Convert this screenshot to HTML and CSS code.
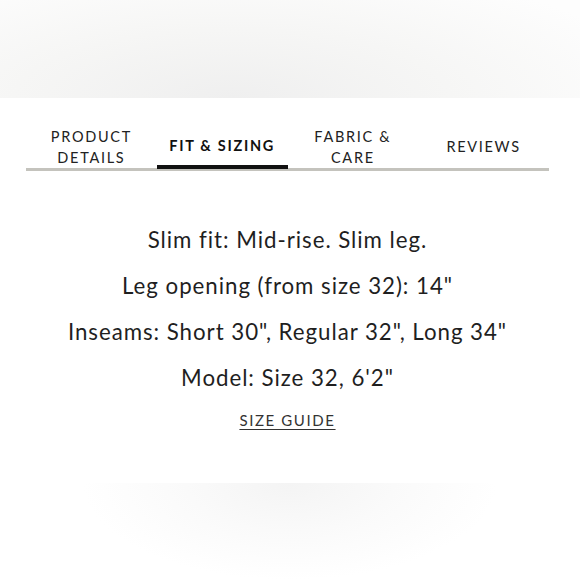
FILE: index.html
```html
<!DOCTYPE html>
<html lang="en">
<head>
<meta charset="utf-8">
<link rel="stylesheet" href="styles.css">
</head>
<body>
<div class="top-fade"></div>
<section class="panel">
  <nav class="tabs">
    <div class="tab">PRODUCT<br>DETAILS</div>
    <div class="tab active">FIT &amp; SIZING</div>
    <div class="tab">FABRIC &amp;<br>CARE</div>
    <div class="tab">REVIEWS</div>
  </nav>
  <div class="content">
    <p class="line">Slim fit: Mid-rise. Slim leg.</p>
    <p class="line">Leg opening (from size 32): 14"</p>
    <p class="line">Inseams: Short 30", Regular 32", Long 34"</p>
    <p class="line">Model: Size 32, 6'2"</p>
    <a class="guide">SIZE GUIDE</a>
  </div>
</section>
<div class="bottom-fade"></div>
</body>
</html>
```
FILE: styles.css
```css
html, body {
  margin: 0;
  padding: 0;
  background: #fff;
}
body {
  width: 580px;
  height: 580px;
  overflow: hidden;
  font-family: Lato, "Noto Sans", sans-serif;
  color: #1f1f1f;
}
.top-fade {
  height: 98px;
  background: radial-gradient(ellipse 75% 140% at 40% 100%, #efefef 0%, #f6f6f5 50%, #fdfdfd 100%);
}
.panel {
  height: 385px;
  padding: 27px 31px 0 26px;
  box-sizing: border-box;
}
.tabs {
  display: grid;
  grid-template-columns: repeat(4, 1fr);
  border-bottom: 3px solid #c4c3bd;
}
.tab {
  height: 43px;
  display: flex;
  align-items: center;
  justify-content: center;
  text-align: center;
  font-size: 14.5px;
  line-height: 21px;
  letter-spacing: 1.7px;
  color: #222;
}
.tab.active {
  font-weight: 700;
  color: #111;
  border-bottom: 4px solid #111;
  margin-bottom: -3px;
  height: 44px;
  box-sizing: border-box;
  padding-top: 1px;
}
.content {
  display: flex;
  flex-direction: column;
  align-items: center;
  padding-top: 46px;
}
.line {
  margin: 0;
  font-size: 22.3px;
  line-height: 46px;
  letter-spacing: 0.95px;
}
.guide {
  margin-top: 10px;
  font-size: 15px;
  letter-spacing: 1.6px;
  text-decoration: underline;
  text-underline-offset: 3px;
  color: #333;
}
.bottom-fade {
  height: 97px;
  background: radial-gradient(ellipse 45% 100% at 50% 0%, #f4f4f4 0%, #fafafa 50%, #fff 100%);
  margin: 0 60px;
}
```
